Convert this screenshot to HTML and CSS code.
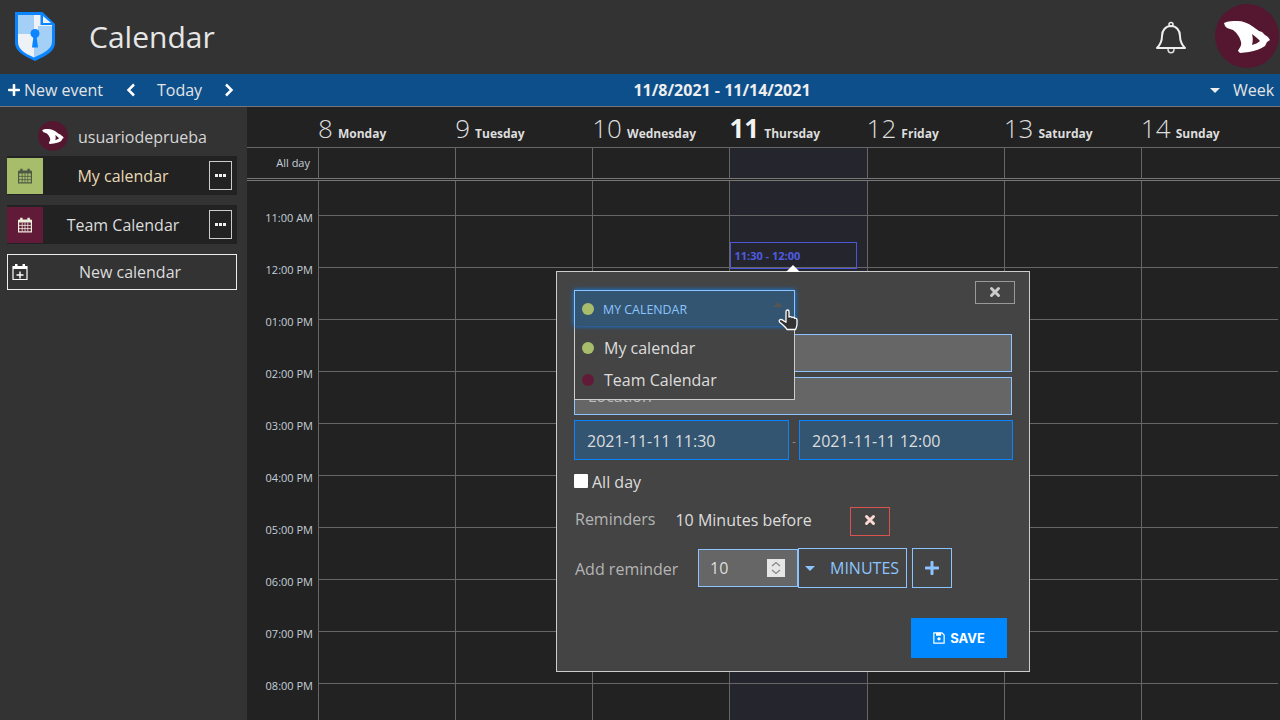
FILE: index.html
```html
<!DOCTYPE html>
<html lang="en">
  <head>
    <meta charset="UTF-8" />
    <meta name="viewport" content="width=device-width, initial-scale=1.0" />
    <title>Calendar</title>
    <link rel="stylesheet" href="styles.css">
  </head>
  <body>
    <svg class="defs" width="0" height="0">
      <symbol id="brand" viewBox="0 0 64 64">
        <path fill="#fff" fill-rule="evenodd" d="M9 19C13 17 18 17 22 17C28 17 33 19 37 22L44 27L47 28L50 31L53 33L55 36L52 38L50 42C46 45 40 47 34 48L25 49L23 47C24 44 27 42 26 38C25 33 21 28 18 26L12 24L10 22ZM37 30C38 34 38 37 37 41C40 40 43 39 45 37C43 35 40 32 37 30Z" />
      </symbol>
      <symbol id="cal" viewBox="0 0 20 20">
        <path fill="none" stroke="currentColor" stroke-width="1.5" d="M2 4.500h16v14H2z" />
        <path fill="currentColor" d="M4 1h3v5H4zM13 1h3v5h-3zM2 3h16v4H2z" />
        <path fill="none" stroke="currentColor" stroke-width="1" d="M2 10.500h16M2 14.500h16M6.500 7v11M10 7v11M13.500 7v11" />
      </symbol>
      <symbol id="dots" viewBox="0 0 11 3">
        <path fill="#eee" d="M0 0h3v3H0zM4 0h3v3H4zM8 0h3v3H8z" />
      </symbol>
    </svg>

    <header class="top">
      <svg class="logo" viewBox="0 0 40 50">
        <path fill="#0a84ff" d="M0 1h27.500L40 13v19c0 8-9 13-20 18C9 45 0 40 0 32z" />
        <path fill="#a4d0f8" d="M3 4h16v19H3z" />
        <path fill="#eef2f6" d="M19 4h6.500v10H37v9H19zM3 23h16v23.500C9 42 3 38 3 31z" />
        <path fill="#a4d0f8" d="M23 15h14v8H23zM19 23h18v8c0 7-8 11-18 15.500z" />
        <path fill="#eef2f6" d="M28 5l8 7h-8z" />
        <circle cx="20" cy="22.500" r="4.500" fill="#0a84ff" />
        <path fill="#0a84ff" d="M18.500 25h3l1.500 11.500h-6z" />
      </svg>
      <h1 class="app-title">Calendar</h1>
      <svg class="bell" viewBox="0 0 32 34">
        <path fill="none" stroke="#eee" stroke-width="2" stroke-linejoin="round" d="M2 27c3-3 5-6 5-12 0-6 4-10 9-10s9 4 9 10c0 6 2 9 5 12z" />
        <circle cx="16" cy="3.500" r="2" fill="none" stroke="#eee" stroke-width="1.500" />
        <path fill="none" stroke="#ddd" stroke-width="1.500" d="M13 28c0 5 6 5 6 0" />
      </svg>
      <div class="avatar avatar-big"><svg><use href="#brand" /></svg></div>
    </header>

    <nav class="toolbar">
      <div class="toolbar-left">
        <svg class="tb-plus" viewBox="0 0 448 512"><path fill="#fff" d="M416 208H272V64c0-17.670-14.330-32-32-32h-32c-17.670 0-32 14.330-32 32v144H32c-17.670 0-32 14.330-32 32v32c0 17.670 14.330 32 32 32h144v144c0 17.670 14.330 32 32 32h32c17.670 0 32-14.330 32-32V304h144c17.670 0 32-14.330 32-32v-32c0-17.670-14.330-32-32-32z" /></svg>
        <span class="tb-new">New event</span>
        <svg class="chev" viewBox="0 0 10 14"><path d="M8 1.500L2.500 7 8 12.500" /></svg>
        <span class="tb-today">Today</span>
        <svg class="chev" viewBox="0 0 10 14"><path d="M2 1.500L7.500 7 2 12.500" /></svg>
      </div>
      <div class="tb-range">11/8/2021 - 11/14/2021</div>
      <div class="tb-view"><span class="caret"></span><span>Week</span></div>
    </nav>

    <div class="main">
      <aside class="side">
        <div class="user">
          <div class="avatar avatar-small"><svg><use href="#brand" /></svg></div>
          <span class="user-name">usuariodeprueba</span>
        </div>
        <div class="cal-item">
          <div class="cal-color green"><svg><use href="#cal" /></svg></div>
          <span class="cal-name orange">My calendar</span>
          <button class="more"><svg><use href="#dots" /></svg></button>
        </div>
        <div class="cal-item">
          <div class="cal-color wine"><svg><use href="#cal" /></svg></div>
          <span class="cal-name">Team Calendar</span>
          <button class="more"><svg><use href="#dots" /></svg></button>
        </div>
        <div class="new-cal">
          <svg viewBox="0 0 16 18">
            <path fill="none" stroke="#fff" stroke-width="1.200" d="M1 3.500h14v13H1z" />
            <path fill="#fff" d="M3 1h2.500v4H3zM10.500 1H13v4h-2.500zM1 3h14v3H1zM7.300 8.500h1.400v2.800h2.800v1.400H8.700v2.800H7.300v-2.800H4.500v-1.400h2.800z" />
          </svg>
          <span>New calendar</span>
        </div>
      </aside>

      <section class="week">
        <div class="week-head">
          <div class="corner"></div>
          <div class="day-head"><b>8</b> Monday</div>
          <div class="day-head"><b>9</b> Tuesday</div>
          <div class="day-head"><b>10</b> Wednesday</div>
          <div class="day-head today"><b>11</b> Thursday</div>
          <div class="day-head"><b>12</b> Friday</div>
          <div class="day-head"><b>13</b> Saturday</div>
          <div class="day-head"><b>14</b> Sunday</div>
        </div>
        <div class="allday">
          <div class="allday-label">All day</div>
          <div class="allday-cell"></div>
          <div class="allday-cell"></div>
          <div class="allday-cell"></div>
          <div class="allday-cell today-bg"></div>
          <div class="allday-cell"></div>
          <div class="allday-cell"></div>
          <div class="allday-cell"></div>
        </div>
        <div class="grid">
          <div class="times">
            <span>11:00 AM</span>
            <span>12:00 PM</span>
            <span>01:00 PM</span>
            <span>02:00 PM</span>
            <span>03:00 PM</span>
            <span>04:00 PM</span>
            <span>05:00 PM</span>
            <span>06:00 PM</span>
            <span>07:00 PM</span>
            <span>08:00 PM</span>
          </div>
          <div class="col"></div>
          <div class="col"></div>
          <div class="col"></div>
          <div class="col today-col">
            <div class="event">11:30 - 12:00</div>
          </div>
          <div class="col"></div>
          <div class="col"></div>
          <div class="col"></div>
        </div>
      </section>
    </div>

    <div class="dialog">
      <div class="arrow"></div>
      <div class="dialog-top">
        <button class="close">
          <svg viewBox="0 0 12 12"><path d="M2.500 2.500l7 7M9.500 2.500l-7 7" /></svg>
        </button>
      </div>
      <input class="field" type="text" />
      <input class="field" type="text" placeholder="Location" />
      <div class="dates">
        <div class="date">2021-11-11 11:30</div>
        <span class="dash">-</span>
        <div class="date date-end">2021-11-11 12:00</div>
      </div>
      <div class="allday-check"><span class="box"></span>All day</div>
      <div class="reminders">
        <span class="muted rem-label">Reminders</span>
        <span class="rem-text">10 Minutes before</span>
        <button class="rem-del">
          <svg viewBox="0 0 12 12"><path d="M2.500 2.500l7 7M9.500 2.500l-7 7" /></svg>
        </button>
      </div>
      <div class="add-rem">
        <span class="muted add-label">Add reminder</span>
        <div class="num">10
          <span class="spin">
            <svg viewBox="0 0 18 18"><path d="M5 7l4-3.500L13 7M5 11l4 3.500 4-3.500" /></svg>
          </span>
        </div>
        <div class="unit"><span class="caret blue"></span>MINUTES</div>
        <button class="add-btn">
          <svg viewBox="0 0 448 512"><path fill="#8cc4ff" d="M416 208H272V64c0-17.670-14.330-32-32-32h-32c-17.670 0-32 14.330-32 32v144H32c-17.670 0-32 14.330-32 32v32c0 17.670 14.330 32 32 32h144v144c0 17.670 14.330 32 32 32h32c17.670 0 32-14.330 32-32V304h144c17.670 0 32-14.330 32-32v-32c0-17.670-14.330-32-32-32z" /></svg>
        </button>
      </div>
      <div class="dialog-foot">
        <button class="save">
          <svg viewBox="0 0 14 14"><path fill="none" stroke="#fff" stroke-width="1.400" d="M1 1h9.500L13 3.500V13H1z" /><path fill="#fff" d="M3.500 1h6v3.500h-6zM5 8a2 2 0 1 0 4 0 2 2 0 1 0-4 0z" /></svg>
          SAVE
        </button>
      </div>

      <div class="picker">
        <div class="picker-head">
          <span class="dot green"></span>
          <span class="picker-label">MY CALENDAR</span>
          <span class="picker-caret"></span>
        </div>
        <div class="picker-opt"><span class="dot green"></span>My calendar</div>
        <div class="picker-opt"><span class="dot wine"></span>Team Calendar</div>
      </div>
      <svg class="hand" viewBox="0 0 20 22">
        <path fill="#333" stroke="#fff" stroke-width="1.300" stroke-linejoin="round" d="M8 2.500c0-2 3-2 3 0V8c1-.8 2.500-.5 3 .5 1-.6 2.200-.2 2.600.8 1.200-.4 2.400.4 2.400 1.700v4c0 2.500-.7 3.500-1.500 5.500H9c-1-2-3.500-4-7.300-7.300C.5 11.500 2 9.800 3.800 10.600L8 13.200z" />
      </svg>
    </div>
  </body>
</html>
```

FILE: styles.css
```css
* {
  box-sizing: border-box;
}

html,
body {
  height: 100%;
}

body {
  margin: 0;
  overflow: hidden;
  font-family: "Open Sans", "Noto Sans", sans-serif;
  font-size: 16px;
  color: #ddd;
  background-color: #222;
  position: relative;
}

button {
  font-family: inherit;
  background: none;
  padding: 0;
  cursor: pointer;
}

.defs {
  position: absolute;
}

/* top bar */
.top {
  height: 74px;
  background-color: #333;
  display: flex;
  align-items: center;
  padding: 0 1px 2px 15px;
}

.logo {
  width: 40px;
  height: 50px;
}

.app-title {
  margin: 0 0 0 34px;
  font-size: 30px;
  font-weight: 400;
  color: #e6e6e6;
  flex: 1;
}

.bell {
  width: 32px;
  height: 34px;
  margin: 4px 28px 0 0;
}

.avatar {
  border-radius: 50%;
  background-color: #54172f;
  display: flex;
  align-items: center;
  justify-content: center;
}

.avatar svg {
  width: 100%;
  height: 100%;
}

.avatar-big {
  width: 64px;
  height: 64px;
}

.avatar-small {
  width: 30px;
  height: 30px;
}

/* toolbar */
.toolbar {
  height: 33px;
  background-color: #0d4f8b;
  border-bottom: 1px solid #777;
  display: flex;
  align-items: center;
  color: #e4e4e4;
}

.toolbar-left {
  width: 247px;
  display: flex;
  align-items: center;
  padding-left: 8px;
}

.tb-plus {
  width: 12px;
  height: 14px;
  margin-right: 4px;
}

.tb-new {
  width: 102px;
}

.chev {
  width: 10px;
  height: 14px;
  fill: none;
  stroke: #fff;
  stroke-width: 2.500;
}

.tb-today {
  width: 46px;
  margin: 0 21px 0 21px;
}

.tb-range {
  flex: 1;
  text-align: center;
  font-size: 16px;
  font-weight: 700;
  color: #eee;
}

.tb-view {
  width: 83px;
  display: flex;
  align-items: center;
  padding-left: 13px;
  gap: 13px;
}

.caret {
  width: 0;
  height: 0;
  border-left: 5px solid transparent;
  border-right: 5px solid transparent;
  border-top: 5px solid #eee;
}

.caret.blue {
  border-top-color: #8cc4ff;
}

/* sidebar */
.main {
  display: flex;
  height: 613px;
}

.side {
  width: 247px;
  flex-shrink: 0;
  background-color: #333;
  padding: 14px 10px 0 7px;
}

.user {
  display: flex;
  align-items: center;
  justify-content: center;
  gap: 10px;
  height: 30px;
  margin-bottom: 5px;
  padding-left: 1px;
  color: #d6d6d6;
}

.user-name {
  padding-top: 2px;
}

.cal-item {
  height: 39px;
  margin-bottom: 10px;
  background-color: #222;
  display: flex;
  align-items: center;
}

.cal-color {
  width: 36px;
  height: 36px;
  display: flex;
  align-items: center;
  justify-content: center;
}

.cal-color svg {
  width: 16px;
  height: 16px;
}

.green {
  background-color: #a8bd6c;
  color: #4c5a44;
}

.wine {
  background-color: #611a37;
  color: #eed;
}

.cal-name {
  flex: 1;
  text-align: center;
  padding: 1px 6px 0 0;
  color: #dcdcdc;
}

.cal-name.orange {
  color: #e8d9b5;
}

.more {
  width: 23px;
  height: 29px;
  margin-right: 5px;
  border: 1px solid #ccc;
  display: flex;
  align-items: center;
  justify-content: center;
}

.more svg {
  width: 11px;
  height: 3px;
}

.new-cal {
  height: 36px;
  border: 1px solid #eee;
  display: flex;
  align-items: center;
  padding-left: 4px;
  color: #dcdcdc;
}

.new-cal svg {
  width: 16px;
  height: 18px;
}

.new-cal span {
  flex: 1;
  text-align: center;
  padding-right: 4px;
}

/* week view */
.week {
  flex: 1;
  display: flex;
  flex-direction: column;
  min-width: 0;
}

.week-head,
.allday,
.grid {
  display: grid;
  grid-template-columns: 71px repeat(7, 1fr);
  padding-right: 2px;
  flex-shrink: 0;
}

.week-head {
  height: 41px;
  border-bottom: 1px solid #666;
}

.day-head {
  padding-top: 3px;
  font-size: 12px;
  font-weight: 700;
  color: #ddd;
  white-space: nowrap;
}

.day-head b {
  font-size: 26px;
  font-weight: 300;
  margin-right: 2px;
}

.day-head.today b {
  font-weight: 700;
  color: #f2f2f2;
}

.allday {
  height: 33px;
  border-bottom: 3px double #777;
}

.allday-label {
  padding: 7px 8px 0 0;
  font-size: 11px;
  text-align: right;
  color: #c4d0da;
}

.allday-cell {
  border-left: 1px solid #666;
}

.today-bg,
.today-col {
  background-color: #25252e;
}

.grid {
  flex: 1 1 0;
  min-height: 0;
  overflow: hidden;
  grid-template-rows: minmax(0, 1fr);
}

.times {
  display: flex;
  flex-direction: column;
  padding: 29px 5px 0 0;
  text-align: right;
  font-size: 11px;
  color: #c4d0da;
}

.times span {
  height: 52px;
  flex-shrink: 0;
  line-height: 15px;
}

.col {
  border-left: 1px solid #666;
  background-image: linear-gradient(to bottom, transparent 51px, #666 51px);
  background-size: 100% 52px;
  background-position: 0 -17px;
  position: relative;
}

.event {
  position: absolute;
  left: 0;
  top: 61px;
  width: 127px;
  height: 27px;
  border: 1px solid #4a55d8;
  padding: 5px 3px;
  font-size: 11px;
  line-height: 15px;
  font-weight: 700;
  color: #4f5be0;
}

/* event dialog */
.dialog {
  position: absolute;
  left: 556px;
  top: 271px;
  width: 474px;
  height: 401px;
  background-color: #444;
  border: 1px solid #ccc;
  padding: 9px 17px 0;
}

.arrow {
  position: absolute;
  left: 229px;
  top: -7px;
  width: 0;
  height: 0;
  border-left: 7px solid transparent;
  border-right: 7px solid transparent;
  border-bottom: 7px solid #fff;
}

.dialog-top {
  height: 53px;
  display: flex;
  justify-content: flex-end;
}

.close {
  width: 40px;
  height: 23px;
  margin-right: -3px;
  border: 1px solid #999;
}

.close svg,
.rem-del svg {
  width: 12px;
  height: 12px;
  fill: none;
  stroke: #ccc;
  stroke-width: 3;
  stroke-linecap: round;
}

.field {
  display: block;
  width: 438px;
  height: 38px;
  margin-bottom: 5px;
  padding: 0 13px;
  background-color: #666;
  border: 1px solid #8cc4ff;
  font-family: inherit;
  font-size: 16px;
  color: #ddd;
}

.field::placeholder {
  color: #bbb;
}

.dates {
  display: flex;
  align-items: center;
  width: 439px;
  justify-content: space-between;
}

.date {
  width: 215px;
  height: 40px;
  padding: 2px 12px 0;
  display: flex;
  align-items: center;
  background-color: #335572;
  border: 1px solid #0a84ff;
  color: #ddd;
}

.date-end {
  width: 214px;
}

.dash {
  font-size: 11px;
  color: #999;
}

.allday-check {
  display: flex;
  align-items: center;
  gap: 4px;
  margin-top: 11px;
  height: 22px;
  color: #ddd;
}

.box {
  width: 14px;
  height: 14px;
  background-color: #fff;
  border-radius: 1px;
  margin-top: -2px;
}

.muted {
  color: #b4b4b4;
}

.reminders {
  display: flex;
  align-items: center;
  height: 30px;
  margin-top: 13px;
  padding-left: 1px;
}

.rem-label {
  padding-bottom: 4px;
}

.rem-text {
  margin-left: 20px;
  width: 175px;
  padding-bottom: 2px;
  color: #ddd;
}

.rem-del {
  width: 40px;
  height: 29px;
  border: 1px solid #d9534f;
}

.rem-del svg {
  stroke: #fbd9d5;
}

.add-rem {
  display: flex;
  align-items: center;
  margin-top: 12px;
  height: 40px;
}

.add-label {
  width: 124px;
  padding: 2px 0 0 1px;
}

.num {
  width: 100px;
  height: 38px;
  background-color: #666;
  border: 1px solid #8cc4ff;
  padding-left: 11px;
  display: flex;
  align-items: center;
  justify-content: space-between;
  color: #ddd;
}

.spin {
  width: 18px;
  height: 18px;
  margin-right: 12px;
  background-color: #e6e6e6;
}

.spin svg {
  display: block;
  fill: none;
  stroke: #888;
  stroke-width: 1.300;
}

.unit {
  width: 109px;
  height: 40px;
  border: 1px solid #8cc4ff;
  display: flex;
  align-items: center;
  gap: 15px;
  padding-left: 6px;
  color: #8cc4ff;
}

.add-btn {
  width: 40px;
  height: 40px;
  margin-left: 5px;
  border: 1px solid #8cc4ff;
}

.add-btn svg {
  display: block;
  width: 14px;
  height: 16px;
  margin: 0 auto;
}

.dialog-foot {
  display: flex;
  justify-content: flex-end;
  margin-top: 30px;
  padding-right: 5px;
}

.save {
  width: 96px;
  height: 40px;
  background-color: #0088ff;
  border: none;
  color: #fff;
  font-family: "Inter", sans-serif;
  font-size: 13px;
  font-weight: 700;
  display: flex;
  align-items: center;
  justify-content: center;
  gap: 5px;
}

.save svg {
  width: 12px;
  height: 12px;
}

/* open calendar picker */
.picker {
  position: absolute;
  left: 17px;
  top: 18px;
  width: 221px;
  height: 110px;
  background-color: #444;
  border: 1px solid #ccc;
}

.picker-head {
  height: 36px;
  margin: -1px -1px 0;
  display: flex;
  align-items: center;
  padding: 0 8px 0 7px;
  background-color: #335572;
  border: 1px solid #8cc4ff;
  border-bottom: none;
  box-shadow: 0 0 5px #0a84ff;
  font-size: 12.400px;
  color: #8cc4ff;
}

.picker-head .dot {
  margin-right: 9px;
}

.picker-label {
  flex: 1;
  padding-top: 2px;
}

.picker-caret {
  width: 0;
  height: 0;
  border-left: 5px solid transparent;
  border-right: 5px solid transparent;
  border-bottom: 5px solid #555;
  margin: 0 3px 8px 0;
}

.dot {
  width: 12px;
  height: 12px;
  border-radius: 50%;
  flex-shrink: 0;
}

.dot.green {
  background-color: #a8bd6c;
}

.dot.wine {
  background-color: #611a37;
}

.picker-opt {
  height: 32px;
  display: flex;
  align-items: center;
  gap: 10px;
  padding: 0 0 0 7px;
  color: #ddd;
}

.picker-head + .picker-opt {
  margin-top: 6px;
}

.hand {
  position: absolute;
  left: 221px;
  top: 37px;
  width: 20px;
  height: 22px;
}
```
